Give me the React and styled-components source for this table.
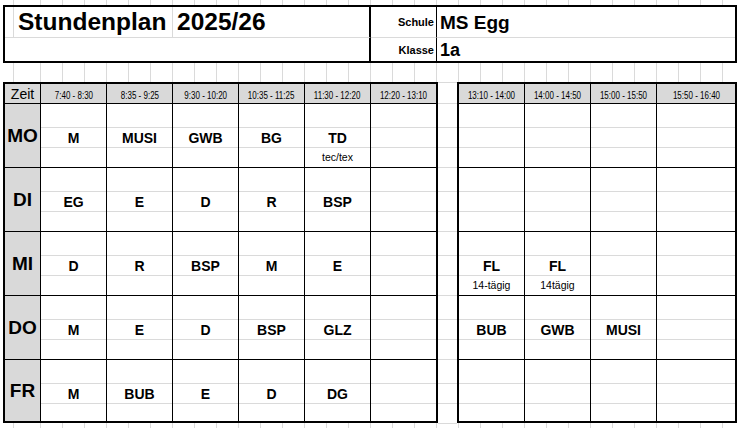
import styled, { createGlobalStyle } from 'styled-components';

const LINE = '#dadada';
const FILL = '#d9d9d9';

const GlobalStyle = createGlobalStyle`
  *, *::before, *::after {
    box-sizing: border-box;
  }

  html, body {
    margin: 0;
  }

  body {
    min-height: 100vh;
    font-family: "Liberation Sans", Arial, sans-serif;
    color: #000;
    background-color: #fff;
    background-image:
      linear-gradient(to right, transparent 13px, ${LINE} 13px 14px, #fff 14px 40px, transparent 40px),
      linear-gradient(to right, ${LINE} 0 1px, transparent 1px);
    background-size: 100% 100%, 22px 100%;
    background-repeat: no-repeat, repeat;
    background-position: 0 0, 40px 0;
  }
`;

const Sheet = styled.div`
  width: 734px;
  padding: 5px 0 0 3px;
  box-sizing: content-box;
`;

/* ---------- Kopfzeile ---------- */

const HeaderBox = styled.div`
  display: grid;
  grid-template-columns: 366px 66px 1fr;
  grid-template-rows: 31px 23px;
  border: 2px solid #000;
  background: #fff;
`;

const TitleRow = styled.div`
  display: flex;
  border-right: 2px solid #000;
  border-bottom: ${p => (p.$top ? `1px solid ${LINE}` : 'none')};
`;

const TitleCell = styled.div`
  display: flex;
  align-items: center;
  width: ${p => (p.$w ? `${p.$w}px` : 'auto')};
  flex: ${p => (p.$w ? 'none' : 1)};
  padding-left: ${p => p.$pad || 0}px;
  border-right: ${p => (p.$w ? `1px solid ${LINE}` : 'none')};
`;

const Title = styled.span`
  font-size: 24.5px;
  font-weight: bold;
  line-height: 1;
  white-space: nowrap;
`;

const Label = styled.div`
  display: flex;
  align-items: center;
  justify-content: flex-end;
  padding-right: 2px;
  border-right: 1px solid #000;
  border-bottom: ${p => (p.$top ? `1px solid ${LINE}` : 'none')};
  font-size: 11px;
  font-weight: bold;
`;

const Value = styled.div`
  display: flex;
  align-items: center;
  padding-left: 3px;
  border-bottom: ${p => (p.$top ? `1px solid ${LINE}` : 'none')};
  font-size: ${p => p.$size}px;
  font-weight: bold;
  line-height: 1;
`;

/* ---------- Stundenplan ---------- */

const Schedule = styled.div`
  display: flex;
  align-items: flex-start;
  margin-top: 19px;
`;

const Block = styled.div`
  display: grid;
  grid-template-columns: ${p => p.$cols};
  grid-template-rows: 19px repeat(4, 63px) 61px;
  gap: 1px;
  background: #000;
  border: 2px solid #000;
`;

const HeadCell = styled.div`
  display: flex;
  align-items: flex-end;
  justify-content: center;
  padding-bottom: 2px;
  background: ${FILL};
`;

const ZeitText = styled.span`
  font-size: 14px;
  line-height: 1;
`;

const TimeText = styled.span`
  display: inline-block;
  font-size: 10px;
  line-height: 1;
  white-space: nowrap;
  transform: scaleX(0.8);
`;

const DayCell = styled.div`
  display: flex;
  align-items: center;
  justify-content: center;
  background: ${FILL};
  font-size: 19px;
  font-weight: bold;
`;

const Slot = styled.div`
  display: flex;
  flex-direction: column;
  background: #fff;
`;

const SubRow = styled.div`
  display: flex;
  align-items: center;
  justify-content: center;
  flex: ${p => (p.$h ? 'none' : 1)};
  height: ${p => (p.$h ? `${p.$h}px` : 'auto')};
  border-bottom: ${p => (p.$h ? `1px solid ${LINE}` : 'none')};
  font-size: ${p => (p.$note ? '10.5px' : '14px')};
  font-weight: ${p => (p.$note ? 'normal' : 'bold')};
  line-height: 1;
  white-space: nowrap;
`;

const Gap = styled.div`
  display: flex;
  flex-direction: column;
  width: 19px;
  border-top: 1px solid ${LINE};
`;

const GapLine = styled.div`
  height: ${p => p.$h}px;
  border-bottom: 1px solid ${LINE};
`;

const leftTimes = ['7:40 - 8:30', '8:35 - 9:25', '9:30 - 10:20', '10:35 - 11:25', '11:30 - 12:20', '12:20 - 13:10'];
const rightTimes = ['13:10 - 14:00', '14:00 - 14:50', '15:00 - 15:50', '15:50 - 16:40'];

const days = [
  { tag: 'MO', left: ['M', 'MUSI', 'GWB', 'BG', ['TD', 'tec/tex'], ''], right: ['', '', '', ''] },
  { tag: 'DI', left: ['EG', 'E', 'D', 'R', 'BSP', ''], right: ['', '', '', ''] },
  { tag: 'MI', left: ['D', 'R', 'BSP', 'M', 'E', ''], right: [['FL', '14-tägig'], ['FL', '14tägig'], '', ''] },
  { tag: 'DO', left: ['M', 'E', 'D', 'BSP', 'GLZ', ''], right: ['BUB', 'GWB', 'MUSI', ''] },
  { tag: 'FR', left: ['M', 'BUB', 'E', 'D', 'DG', ''], right: ['', '', '', ''] },
];

function Lesson({ entry }) {
  const [fach, notiz] = Array.isArray(entry) ? entry : [entry, ''];
  return (
    <Slot>
      <SubRow $h={24} />
      <SubRow $h={20}>{fach}</SubRow>
      <SubRow $note>{notiz}</SubRow>
    </Slot>
  );
}

export default function App() {
  return (
    <>
      <GlobalStyle />
      <Sheet>
        <HeaderBox>
          <TitleRow $top>
            <TitleCell $w={9} />
            <TitleCell $w={159} $pad={4}>
              <Title>Stundenplan</Title>
            </TitleCell>
            <TitleCell $pad={4}>
              <Title>2025/26</Title>
            </TitleCell>
          </TitleRow>
          <Label $top>Schule</Label>
          <Value $top $size={19}>MS Egg</Value>
          <TitleRow />
          <Label>Klasse</Label>
          <Value $size={18}>1a</Value>
        </HeaderBox>

        <Schedule>
          <Block $cols="35px repeat(6, 65px)">
            <HeadCell><ZeitText>Zeit</ZeitText></HeadCell>
            {leftTimes.map(t => (
              <HeadCell key={t}><TimeText>{t}</TimeText></HeadCell>
            ))}
            {days.map(day => [
              <DayCell key={day.tag}>{day.tag}</DayCell>,
              ...day.left.map((e, i) => <Lesson key={day.tag + i} entry={e} />),
            ])}
          </Block>

          <Gap>
            <GapLine $h={21} />
            {days.map(day => [24, 20, 20].map((h, i) => <GapLine key={day.tag + i} $h={h} />))}
          </Gap>

          <Block $cols="repeat(3, 65px) 78px">
            {rightTimes.map(t => (
              <HeadCell key={t}><TimeText>{t}</TimeText></HeadCell>
            ))}
            {days.map(day => day.right.map((e, i) => <Lesson key={day.tag + 'r' + i} entry={e} />))}
          </Block>
        </Schedule>
      </Sheet>
    </>
  );
}
